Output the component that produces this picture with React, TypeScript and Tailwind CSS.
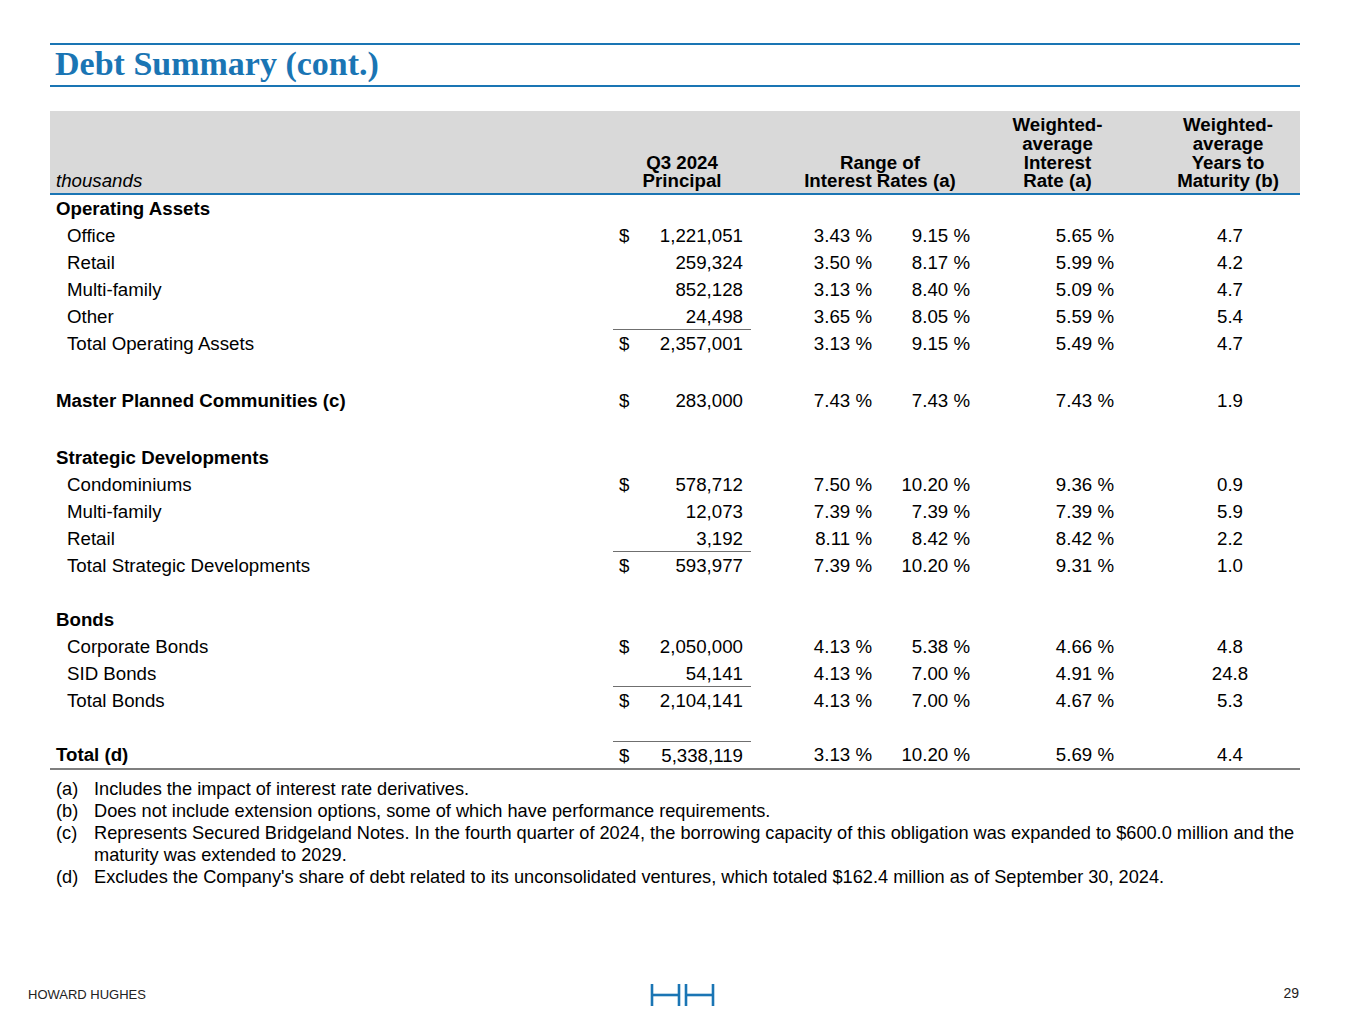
import React from "react";

type DebtRow = {
  label: string;
  kind?: "section" | "item" | "bold";
  dollar?: boolean;
  principal?: string;
  low?: string;
  high?: string;
  rate?: string;
  years?: string;
  underline?: boolean;
  overline?: boolean;
  spacer?: number;
};

const rows: DebtRow[] = [
  { label: "Operating Assets", kind: "section" },
  { label: "Office", dollar: true, principal: "1,221,051", low: "3.43 %", high: "9.15 %", rate: "5.65 %", years: "4.7" },
  { label: "Retail", principal: "259,324", low: "3.50 %", high: "8.17 %", rate: "5.99 %", years: "4.2" },
  { label: "Multi-family", principal: "852,128", low: "3.13 %", high: "8.40 %", rate: "5.09 %", years: "4.7" },
  { label: "Other", principal: "24,498", low: "3.65 %", high: "8.05 %", rate: "5.59 %", years: "5.4", underline: true },
  { label: "Total Operating Assets", dollar: true, principal: "2,357,001", low: "3.13 %", high: "9.15 %", rate: "5.49 %", years: "4.7" },
  { label: "", spacer: 30 },
  { label: "Master Planned Communities (c)", kind: "bold", dollar: true, principal: "283,000", low: "7.43 %", high: "7.43 %", rate: "7.43 %", years: "1.9" },
  { label: "", spacer: 30 },
  { label: "Strategic Developments", kind: "section" },
  { label: "Condominiums", dollar: true, principal: "578,712", low: "7.50 %", high: "10.20 %", rate: "9.36 %", years: "0.9" },
  { label: "Multi-family", principal: "12,073", low: "7.39 %", high: "7.39 %", rate: "7.39 %", years: "5.9" },
  { label: "Retail", principal: "3,192", low: "8.11 %", high: "8.42 %", rate: "8.42 %", years: "2.2", underline: true },
  { label: "Total Strategic Developments", dollar: true, principal: "593,977", low: "7.39 %", high: "10.20 %", rate: "9.31 %", years: "1.0" },
  { label: "", spacer: 27 },
  { label: "Bonds", kind: "section" },
  { label: "Corporate Bonds", dollar: true, principal: "2,050,000", low: "4.13 %", high: "5.38 %", rate: "4.66 %", years: "4.8" },
  { label: "SID Bonds", principal: "54,141", low: "4.13 %", high: "7.00 %", rate: "4.91 %", years: "24.8", underline: true },
  { label: "Total Bonds", dollar: true, principal: "2,104,141", low: "4.13 %", high: "7.00 %", rate: "4.67 %", years: "5.3" },
  { label: "", spacer: 27 },
];

const notes = [
  { key: "(a)", lines: ["Includes the impact of interest rate derivatives."] },
  { key: "(b)", lines: ["Does not include extension options, some of which have performance requirements."] },
  {
    key: "(c)",
    lines: [
      "Represents Secured Bridgeland Notes. In the fourth quarter of 2024, the borrowing capacity of this obligation was expanded to $600.0 million and the",
      "maturity was extended to 2029.",
    ],
  },
  { key: "(d)", lines: ["Excludes the Company's share of debt related to its unconsolidated ventures, which totaled $162.4 million as of September 30, 2024."] },
];

function Row({ row, last }: { row: DebtRow; last?: boolean }) {
  if (row.spacer) {
    return <div style={{ height: row.spacer }} />;
  }

  const labelClass =
    row.kind === "item" || !row.kind ? "pl-[17px]" : "pl-[6px] font-bold";

  return (
    <div className={`flex leading-[27px] ${last ? "h-[29px] border-b-2 border-[#7f7f7f]" : "h-[27px]"}`}>
      <div className={`w-[563px] ${labelClass}`}>{row.label}</div>
      {row.kind !== "section" && (
        <>
          <div
            className={`flex w-[138px] justify-between pl-[6px] pr-[8px] ${row.underline ? "border-b border-[#6f6f6f]" : ""} ${row.overline ? "border-t border-[#6f6f6f]" : ""}`}
          >
            <span>{row.dollar ? "$" : ""}</span>
            <span>{row.principal}</span>
          </div>
          <div className="w-[121px] text-right">{row.low}</div>
          <div className="w-[98px] text-right">{row.high}</div>
          <div className="w-[144px] text-right">{row.rate}</div>
          <div className="flex-1 pl-[46px] text-center">{row.years}</div>
        </>
      )}
    </div>
  );
}

function Logo() {
  return (
    <svg width="66" height="24" viewBox="0 0 66 24" fill="none" stroke="#1a75b4" strokeWidth="2.6">
      <line x1="2" y1="1" x2="2" y2="23" />
      <line x1="29" y1="1" x2="29" y2="23" />
      <line x1="2" y1="12" x2="29" y2="12" />
      <line x1="36" y1="1" x2="36" y2="23" />
      <line x1="63" y1="1" x2="63" y2="23" />
      <line x1="36" y1="12" x2="63" y2="12" />
    </svg>
  );
}

export default function App() {
  return (
    <div className="flex h-[1024px] w-[1365px] flex-col bg-white text-black font-['Liberation_Sans',Arial,sans-serif]">
      <div className="mx-[50px] mt-[43px] h-[44px] w-[1250px] border-y-2 border-[#1a75b4]">
        <h1 className="pl-[5px] text-[34px] font-bold leading-[38px] text-[#1a75b4] font-['Liberation_Serif','Times_New_Roman',serif]">
          Debt Summary (cont.)
        </h1>
      </div>

      <div className="mx-[50px] mt-[24px] w-[1250px] text-[18.7px]">
        <div className="flex h-[84px] items-end border-b-2 border-[#1a75b4] bg-[#d9d9d9] pb-[2px] text-center font-bold leading-[18.7px]">
          <div className="w-[563px] pl-[6px] text-left font-normal italic">thousands</div>
          <div className="w-[138px]">
            Q3 2024
            <br />
            Principal
          </div>
          <div className="w-[258px]">
            Range of
            <br />
            Interest Rates (a)
          </div>
          <div className="w-[97px]">
            Weighted-
            <br />
            average
            <br />
            Interest
            <br />
            Rate (a)
          </div>
          <div className="flex-1 pl-[50px]">
            Weighted-
            <br />
            average
            <br />
            Years to
            <br />
            Maturity (b)
          </div>
        </div>

        {rows.map((row, i) => (
          <Row key={i} row={row} />
        ))}
        <Row
          last
          row={{
            label: "Total (d)",
            kind: "bold",
            dollar: true,
            principal: "5,338,119",
            low: "3.13 %",
            high: "10.20 %",
            rate: "5.69 %",
            years: "4.4",
            overline: true,
          }}
        />

        <div className="mt-[8px] text-[18.2px] leading-[22px]">
          {notes.map((note) => (
            <div key={note.key} className="flex">
              <span className="w-[44px] shrink-0 pl-[6px]">{note.key}</span>
              <div>
                {note.lines.map((line) => (
                  <div key={line} className="whitespace-nowrap">{line}</div>
                ))}
              </div>
            </div>
          ))}
        </div>
      </div>

      <div className="mt-auto grid h-[58px] grid-cols-3 items-center">
        <div className="pl-[28px] text-[13px] text-[#222]">HOWARD HUGHES</div>
        <div className="flex justify-center">
          <Logo />
        </div>
        <div className="pr-[66px] text-right text-[14px] text-[#222] -translate-y-[2px]">29</div>
      </div>
    </div>
  );
}
